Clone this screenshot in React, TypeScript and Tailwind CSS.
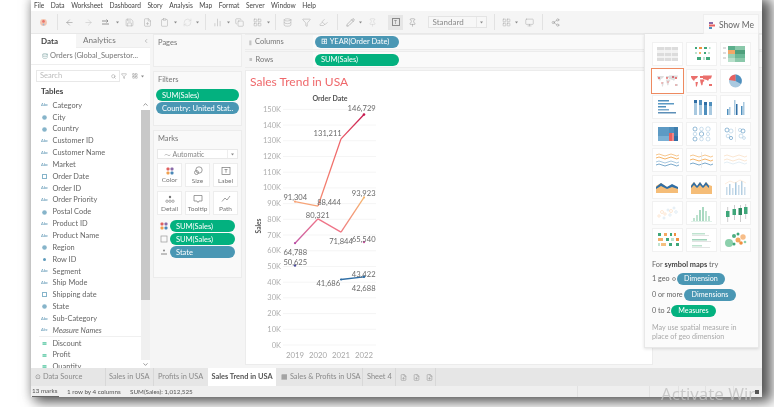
import React from "react";
import { ArrowLeft, ArrowRight, ChevronDown, ChevronUp, ChevronLeft, Save, FilePlus, RefreshCw, Copy, Pin, Share2, Monitor, Filter, Search, Highlighter, Pencil, Database, LayoutGrid, BarChart2, Clipboard } from "lucide-react";

const G = "#a6a6a6";
const ic = { size: 9, strokeWidth: 1.3, color: G };

const Caret = () => <svg width="9" height="9" viewBox="0 0 9 9"><path d="M3 3.5h3L4.5 5.5z" fill="#8a8a8a" /></svg>;
const Sep = () => <div className="mx-auto h-[16px] w-px bg-[#e2e2e2]" />;

const tools: { c: string; n: React.ReactNode }[] = [
  { c: "", n: <svg width="9" height="9" viewBox="0 0 9 9"><circle cx="4.5" cy="4.5" r="3.4" fill="#f4c5b0" /><circle cx="4.5" cy="3.4" r="1.3" fill="#e8736a" /><circle cx="4.5" cy="6.4" r="1" fill="#9fb7d2" /></svg> },
  { c: "ml-[5px]", n: <Sep /> },
  { c: "ml-[3px]", n: <ArrowLeft {...ic} color="#808080" /> },
  { c: "ml-[10px]", n: <ArrowRight {...ic} color="#bdbdbd" /> },
  { c: "ml-[8px]", n: <svg width="9" height="9" viewBox="0 0 9 9" fill="none" stroke="#8a8a8a" strokeWidth="0.9"><path d="M1 3h6M5.5 1.5 7 3 5.500 4.500M1 6h7" /></svg> },
  { c: "ml-[3px]", n: <Caret /> },
  { c: "ml-[3px]", n: <Save {...ic} /> },
  { c: "ml-[9px]", n: <FilePlus {...ic} /> },
  { c: "ml-[8px]", n: <Clipboard {...ic} /> },
  { c: "ml-[2px]", n: <Caret /> },
  { c: "ml-[3px]", n: <RefreshCw {...ic} color="#d0d0d0" /> },
  { c: "ml-[1px]", n: <Caret /> },
  { c: "-ml-[1px]", n: <Sep /> },
  { c: "ml-[3px]", n: <BarChart2 {...ic} /> },
  { c: "ml-[2px]", n: <Caret /> },
  { c: "ml-[2px]", n: <Copy {...ic} /> },
  { c: "ml-[9px]", n: <LayoutGrid {...ic} /> },
  { c: "ml-[2px]", n: <Caret /> },
  { c: "-ml-[2px]", n: <Sep /> },
  { c: "ml-[3px]", n: <Database {...ic} /> },
  { c: "ml-[10px]", n: <Filter {...ic} /> },
  { c: "ml-[8px]", n: <Highlighter {...ic} /> },
  { c: "ml-[5px]", n: <Sep /> },
  { c: "ml-[4px]", n: <Pencil {...ic} color="#808080" /> },
  { c: "ml-[1px]", n: <Caret /> },
  { c: "ml-[3px]", n: <Pin {...ic} color="#d0d0d0" /> },
];

function Toolbar() {
  return (
    <div className="flex h-[23px] shrink-0 items-center border-b border-[#e8e8e8] bg-[#f5f5f5] pl-[8px]">
      {tools.map((t, i) => (
        <div key={i} className={`flex w-[9px] shrink-0 items-center justify-center ${t.c}`}>{t.n}</div>
      ))}
      <div className="ml-[11px] flex h-[15px] w-[15px] shrink-0 items-center justify-center bg-[#e6e6e6]">
        <div className="flex h-[8px] w-[8px] items-center justify-center border border-[#8a8a8a] text-[5px] leading-none text-[#777]">T</div>
      </div>
      <div className="ml-[5px] flex w-[9px] shrink-0 justify-center"><Pin {...ic} color="#909090" /></div>
      <div className="ml-[10.500px] flex h-[12px] w-[59px] shrink-0 items-center justify-between border border-[#e4e4e4] bg-[#f7f7f7] pl-[4px] text-[8px] text-[#8a8a8a]">
        <span>Standard</span>
        <span className="flex h-full w-[10px] items-center justify-center border-l border-[#e8e8e8]"><Caret /></span>
      </div>
      <div className="ml-[3.500px] w-[9px]"><Sep /></div>
      <div className="ml-[3px] w-[9px]"><LayoutGrid {...ic} /></div>
      <div className="ml-[1px] w-[9px]"><Caret /></div>
      <div className="ml-[4px] w-[9px]"><Monitor {...ic} /></div>
      <div className="ml-[4px] w-[9px]"><Sep /></div>
      <div className="ml-[4px] w-[9px]"><Share2 {...ic} color="#909090" /></div>
    </div>
  );
}

type K = "a" | "g" | "c" | "n" | "m";
const dims: [K, string][] = [
  ["a", "Category"], ["g", "City"], ["g", "Country"], ["a", "Customer ID"], ["a", "Customer Name"], ["a", "Market"],
  ["c", "Order Date"], ["a", "Order ID"], ["a", "Order Priority"], ["g", "Postal Code"], ["a", "Product ID"], ["a", "Product Name"],
  ["g", "Region"], ["n", "Row ID"], ["a", "Segment"], ["a", "Ship Mode"], ["c", "Shipping date"], ["g", "State"], ["a", "Sub-Category"], ["m", "Measure Names"],
];

function FIcon({ k }: { k: K | "h" }) {
  if (k === "a" || k === "m") return <span className="w-[7px] text-[4px] leading-none font-bold text-[#7aa9c2]">Abc</span>;
  if (k === "g") return <svg width="7" height="7" viewBox="0 0 7 7"><circle cx="3.500" cy="3.500" r="2.300" fill="#86b4ca" /></svg>;
  if (k === "c") return <svg width="7" height="7" viewBox="0 0 7 7"><rect x="1.500" y="1.500" width="4" height="4" fill="none" stroke="#86b4ca" /></svg>;
  if (k === "n") return <svg width="7" height="7" viewBox="0 0 7 7"><circle cx="3.500" cy="3.500" r="1.500" fill="#5f9cbc" /></svg>;
  return <svg width="7" height="7" viewBox="0 0 7 7"><path d="M1.500 2.800h4M1.500 4.200h4" stroke="#3fbf95" /></svg>;
}

function Field({ k, t }: { k: K | "h"; t: string }) {
  return (
    <div className={`flex h-[11.85px] shrink-0 items-center gap-[4.500px] pl-[10px] text-[7.400px] leading-none text-[#666] ${k === "m" ? "italic" : ""}`}>
      <FIcon k={k} />
      <span>{t}</span>
    </div>
  );
}

function Sidebar() {
  return (
    <div className="flex w-[119px] shrink-0 flex-col bg-white">
      <div className="flex h-[14px] shrink-0">
        <div className="flex w-[45px] items-center pl-[10px] text-[8px] font-bold text-[#444]">Data</div>
        <div className="flex flex-1 items-center justify-between border-b border-[#eee] bg-[#f5f5f5] pr-[1px] pl-[7px] text-[8.200px] text-[#777]">
          <span>Analytics</span>
          <ChevronLeft size={6} color="#888" />
        </div>
      </div>
      <div className="flex h-[17px] shrink-0 items-center gap-[2px] border-b border-[#eee] pl-[11px] text-[7.500px] text-[#777]">
        <Database size={6} color="#8aa" />
        <span>Orders (Global_Superstor...</span>
      </div>
      <div className="mt-[5px] flex h-[12px] shrink-0 items-center pl-[5px]">
        <div className="flex h-[12px] w-[84px] items-center justify-between border border-[#e8e8e8] px-[3px] text-[7.500px] text-[#bbb]">
          <span>Search</span>
          <Search size={5} color="#888" />
        </div>
        <Filter size={6} color="#999" className="ml-[1px]" />
        <LayoutGrid size={6} color="#999" className="ml-[5px]" />
        <Caret />
      </div>
      <div className="flex h-[17.500px] shrink-0 items-center pt-px pl-[10px] text-[8px] font-bold text-[#444]">Tables</div>
      <div className="flex min-h-0 flex-1">
        <div className="flex min-w-0 flex-1 flex-col overflow-hidden">
          {dims.map(([k, t]) => <Field key={t} k={k} t={t} />)}
          <div className="ml-[8px] h-px shrink-0 bg-[#f0f0f0]" />
          <Field k="h" t="Discount" />
          <Field k="h" t="Profit" />
          <Field k="h" t="Quantity" />
        </div>
        <div className="flex w-[9px] shrink-0 flex-col bg-[#f0f0f0]">
          <div className="flex h-[10px] items-center justify-center bg-white"><ChevronUp size={7} color="#555" strokeWidth={2} /></div>
          <div className="h-[190px] bg-[#c8c8c8]" />
          <div className="flex-1" />
          <div className="flex h-[8px] items-center justify-center bg-white"><ChevronDown size={7} color="#555" strokeWidth={2} /></div>
        </div>
      </div>
    </div>
  );
}

const Pill = ({ c, t, w }: { c: string; t: string; w: string }) => (
  <div className={`flex h-[12px] items-center rounded-full pl-[6px] text-[7.500px] leading-none whitespace-nowrap text-white ${c} ${w}`}>{t}</div>
);
const GREEN = "bg-[#03b17f]";
const BLUE = "bg-[#4a97b4]";

const Four = () => (
  <svg width="8" height="8" viewBox="0 0 8 8"><rect x="0.500" y="0.500" width="3" height="3" rx="1" fill="#e0605f" /><rect x="4.500" y="0.500" width="3" height="3" rx="1" fill="#8a6aa8" /><rect x="0.500" y="4.500" width="3" height="3" rx="1" fill="#f0a050" /><rect x="4.500" y="4.500" width="3" height="3" rx="1" fill="#4a88b8" /></svg>
);
const marks: [React.ReactNode, string][] = [
  [<Four />, "Color"],
  [<svg width="10" height="10" viewBox="0 0 10 10" fill="none" stroke="#777" strokeWidth="0.7"><circle cx="6" cy="4" r="3.200" /><circle cx="3.500" cy="6.500" r="2" /></svg>, "Size"],
  [<svg width="10" height="10" viewBox="0 0 10 10"><rect x="1" y="1.500" width="8" height="7" fill="none" stroke="#777" strokeWidth="0.7" /><path d="M3.500 3.500h3M5 3.500v3.200" stroke="#777" strokeWidth="0.7" /></svg>, "Label"],
  [<svg width="10" height="10" viewBox="0 0 10 10" fill="#777"><circle cx="5" cy="3" r="1.200" /><g fill="none" stroke="#777" strokeWidth="0.6"><circle cx="2" cy="7.200" r="1.200" /><circle cx="5" cy="7.200" r="1.200" /><circle cx="8" cy="7.200" r="1.200" /></g></svg>, "Detail"],
  [<svg width="10" height="10" viewBox="0 0 10 10" fill="none" stroke="#777" strokeWidth="0.7"><path d="M1 1.500h8v5.500H6L5 8.500 4 7H1z" /></svg>, "Tooltip"],
  [<svg width="10" height="10" viewBox="0 0 10 10" fill="none" stroke="#777" strokeWidth="0.7"><path d="M1 7.500 4 4l2 2 3-4" /></svg>, "Path"],
];

function Cards() {
  return (
    <div className="flex w-[89px] shrink-0 flex-col">
      <div className="flex h-[33px] shrink-0 flex-col border border-[#ececec] bg-[#f9f9f9] pt-[2px] pl-[4px] text-[7.500px] text-[#777]">Pages</div>
      <div className="mt-[4px] flex h-[55px] shrink-0 flex-col border border-[#ececec] bg-[#f9f9f9] px-[2px] pt-[2px]">
        <div className="pl-[2px] text-[7.500px] text-[#777]">Filters</div>
        <div className="mt-[4px] flex flex-col gap-px">
          <Pill c={GREEN} t="SUM(Sales)" w="w-[83px]" />
          <Pill c={BLUE} t="Country: United Stat.." w="w-[83px]" />
        </div>
      </div>
      <div className="mt-[4px] flex h-[148px] shrink-0 flex-col border border-[#ececec] bg-[#f9f9f9] px-[3px] pt-[2px]">
        <div className="pl-[1px] text-[7.500px] text-[#777]">Marks</div>
        <div className="mt-[5px] flex h-[10px] items-center justify-between border border-[#e8e8e8] bg-white pl-[6px] text-[7px] text-[#888]">
          <span>⁓ Automatic</span>
          <span className="flex h-full w-[10px] items-center justify-center border-l border-[#eee]"><Caret /></span>
        </div>
        <div className="mt-[4px] grid grid-cols-3 gap-x-[3px] gap-y-[4px]">
          {marks.map(([i, t]) => (
            <div key={t} className="flex h-[24px] flex-col items-center justify-center gap-px border border-[#ededed] bg-white text-[6.500px] leading-none text-[#777]">
              {i}
              <span className="mt-[1px]">{t}</span>
            </div>
          ))}
        </div>
        <div className="mt-[5px] flex flex-col gap-px">
          {[
            [<Four />, "SUM(Sales)", GREEN],
            [<svg width="8" height="8" viewBox="0 0 8 8"><rect x="1" y="1" width="6" height="6" fill="none" stroke="#999" strokeWidth="0.7" /></svg>, "SUM(Sales)", GREEN],
            [<svg width="8" height="8" viewBox="0 0 8 8" fill="#888"><circle cx="4" cy="2.500" r="1" /><rect x="1" y="5.500" width="6" height="1" /></svg>, "State", BLUE],
          ].map(([i, t, c], n) => (
            <div key={n} className="flex items-center">
              <span className="ml-[3px] flex w-[8px] shrink-0 justify-center">{i as React.ReactNode}</span>
              <Pill c={`ml-[2px] ${c as string}`} t={t as string} w="w-[65px]" />
            </div>
          ))}
        </div>
      </div>
    </div>
  );
}

const Shelf = ({ icon, label, pill, c, h }: { icon: string; label: string; pill: string; c: string; h: string }) => (
  <div className={`flex shrink-0 items-center border-y border-[#ececec] bg-[#fafafa] ${h}`}>
    <div className="flex h-full w-[68px] shrink-0 items-center gap-[3px] bg-[#f5f5f5] pl-[4px] text-[7.500px] text-[#777]">
      <span className="text-[6px] text-[#999]">{icon}</span>{label}
    </div>
    <Pill c={`ml-[2px] ${c}`} t={pill} w="w-[84px]" />
  </div>
);

const W = 1.571;
const Y = (v: number) => 345 - v * W / 1000;
const X = [295, 318, 341, 364];
const ticks = Array.from({ length: 16 }, (_, i) => i * 10);

function Chart() {
  const seg = (a: number, b: number, va: number, vb: number, c: string) => (
    <line x1={X[a]} y1={Y(va)} x2={X[b]} y2={Y(vb)} stroke={c} strokeWidth="1.300" />
  );
  const lab = (x: number, y: number, t: string) => (
    <text x={x} y={y} textAnchor="middle" dominantBaseline="central" fontSize="7.600" fill="#6a6a6a">{t}</text>
  );
  return (
    <svg width="406" height="274" viewBox="246 90 406 274" fontFamily="Lato" className="shrink-0">
      <text x="330" y="98" textAnchor="middle" dominantBaseline="central" fontSize="7" fontWeight="700" fill="#555">Order Date</text>
      <text x="0" y="0" transform="translate(258 226) rotate(-90)" textAnchor="middle" dominantBaseline="central" fontSize="6.500" fontWeight="700" fill="#555">Sales</text>
      {ticks.map((t) => (
        <g key={t}>
          <line x1="283" x2="376" y1={Y(t * 1000)} y2={Y(t * 1000)} stroke="#f3f3f3" strokeWidth="0.800" />
          <text x="281" y={Y(t * 1000)} textAnchor="end" dominantBaseline="central" fontSize="7.500" fill="#adadad">{t}K</text>
        </g>
      ))}
      {[2019, 2020, 2021, 2022].map((y, i) => (
        <text key={y} x={X[i]} y="355" textAnchor="middle" dominantBaseline="central" fontSize="7.800" fill="#a8a8a8">{y}</text>
      ))}
      <defs>
        <linearGradient id="ga" gradientUnits="userSpaceOnUse" x1="318" y1="206" x2="341" y2="139"><stop offset="0" stopColor="#f58a70" /><stop offset="1" stopColor="#ee6168" /></linearGradient>
        <linearGradient id="gb" gradientUnits="userSpaceOnUse" x1="341" y1="139" x2="364" y2="114"><stop offset="0" stopColor="#ea5a66" /><stop offset="1" stopColor="#c6194f" /></linearGradient>
        <linearGradient id="gc" gradientUnits="userSpaceOnUse" x1="295" y1="243" x2="318" y2="219"><stop offset="0" stopColor="#c55aa6" /><stop offset="1" stopColor="#ef7488" /></linearGradient>
        <linearGradient id="gd" gradientUnits="userSpaceOnUse" x1="341" y1="232" x2="364" y2="197"><stop offset="0" stopColor="#ef7a80" /><stop offset="1" stopColor="#f6b870" /></linearGradient>
      </defs>
      {seg(0, 1, 91304, 88444, "#f7a478")}
      {seg(1, 2, 88444, 131211, "url(#ga)")}
      {seg(2, 3, 131211, 146729, "url(#gb)")}
      {seg(0, 1, 64788, 80321, "url(#gc)")}
      {seg(1, 2, 80321, 71844, "#ef7488")}
      {seg(2, 3, 71844, 93923, "url(#gd)")}
      {seg(2, 3, 41686, 43422, "#2f6ea5")}
      <circle cx={X[0]} cy={Y(91304)} r="1.100" fill="#f7a478" />
      <circle cx={X[3]} cy={Y(146729)} r="1.300" fill="#c6194f" />
      <circle cx={X[3]} cy={Y(93923)} r="1.100" fill="#f6b870" />
      <circle cx={X[0]} cy={Y(64788)} r="1.100" fill="#b84fa6" />
      <circle cx={X[3]} cy={Y(65540)} r="1.200" fill="#c8509f" />
      <circle cx={X[0]} cy={Y(50625)} r="1.200" fill="#4a4a9e" />
      <circle cx={X[2]} cy={Y(41686)} r="1.100" fill="#2f6ea5" />
      <circle cx={X[3]} cy={Y(43422)} r="1.300" fill="#2f6ea5" />
      {lab(361.700, 108, "146,729")}
      {lab(327.700, 133.300, "131,211")}
      {lab(295.300, 197, "91,304")}
      {lab(329, 201.700, "88,444")}
      {lab(317.700, 215, "80,321")}
      {lab(363.700, 192.700, "93,923")}
      {lab(341, 241, "71,844")}
      {lab(363.700, 238.700, "65,540")}
      {lab(295.300, 252.300, "64,788")}
      {lab(295.300, 262.300, "50,625")}
      {lab(363.700, 274, "43,422")}
      {lab(328.300, 283, "41,686")}
      {lab(363.700, 288, "42,688")}
    </svg>
  );
}

const B = "#4f8fbd", L = "#a9c9e0", O = "#f5b56a", R = "#e8605f", GR = "#3fa77a", LG = "#bfe3d0";
const rects = (items: [number, number, number, number, string][]) => items.map(([x, y, w, h, f], i) => <rect key={i} x={x} y={y} width={w} height={h} fill={f} />);
const wave = (y: number, c: string, s = 1) => <path d={`M4 ${y}q3 -2 6 0t6 0t6 0t5 0`} fill="none" stroke={c} strokeWidth={s} />;
const circles = (items: [number, number, number, string][], fill = false) => items.map(([x, y, r, c], i) => <circle key={i} cx={x} cy={y} r={r} fill={fill ? c : "none"} stroke={fill ? "none" : c} strokeWidth="0.600" />);
const world = "M5 7h7l-1 2-2 1-1 2-2-2-1-2zM9.500 13h2.500l-1 4-1 1zM14 7h3v2h-3zM17 6.500h9l-1 3-2 .5-1 2-1-1-4-1zM14 10.500h3.500l1 1.500-1.500 1-.5 3-1 .5-1-3zM23 15h3v2h-3z";

const thumbs: React.ReactNode[] = [
  <>{rects([[5, 5, 21, 14, "#dcdcdc"], [5, 8, 21, 3, "#f2f2f2"], [5, 14, 21, 2, "#f2f2f2"], [12, 5, 0.8, 14, "#f5f5f5"], [19, 5, 0.8, 14, "#f5f5f5"]])}</>,
  <>{rects([[9, 5, 2, 2, GR], [13, 5, 3, 2, "#f09040"], [18, 5, 3, 2, GR], [23, 5, 1.500, 2, LG], [9, 10, 2, 2, LG], [13, 10, 2, 2, "#f5b06a"], [18, 10, 2, 2, GR], [22, 10, 2, 2, LG], [11, 15, 4, 3, GR], [17, 15, 2, 3, LG], [20, 15, 4, 3, GR]])}</>,
  <>{rects([[8, 4, 7, 4, "#5caf8c"], [15, 4, 10, 4, "#8ac8aa"], [8, 8, 7, 4, "#f2a868"], [15, 8, 10, 4, "#4f9f7c"], [8, 12, 7, 4, "#9bd0b5"], [15, 12, 10, 4, "#6ab896"], [8, 16, 7, 4, "#b8dfca"], [15, 16, 10, 4, "#8ac8aa"], [3, 5, 3, 2, "#ddd"], [3, 10, 3, 2, "#ddd"], [3, 15, 3, 2, "#ddd"]])}</>,
  <><path d={world} fill="#dedede" />{circles([[7, 9, 1, R], [10, 14, 0.800, "#e88"], [15, 9, 0.900, R], [16, 13, 0.800, "#e88"], [21, 8, 1, "#c85060"], [24, 9, 1.100, R], [24, 16, 0.800, "#e88"]], true)}</>,
  <><path d={world} fill="#ea6f6c" /></>,
  <><circle cx="15.500" cy="12" r="6.500" fill={L} /><path d="M15.500 12V5.500a6.500 6.500 0 0 1 5.500 9.500z" fill={B} /><path d="M15.500 12 9 11a6.500 6.500 0 0 1 6.500-5.500z" fill={R} /></>,
  <>{rects([[6, 5, 11, 1.500, B], [6, 8, 16, 1.500, "#5d9ac4"], [6, 11, 8, 1.500, B], [6, 14, 11, 1.500, "#7aa9cc"], [6, 17, 18, 1.500, "#5d8fb8"]])}</>,
  <>{rects([[8, 5, 3, 3, "#2f6ea5"], [8, 8, 3, 12, L], [13, 5, 3, 5, B], [13, 10, 3, 10, L], [18, 7, 3, 3, "#2f6ea5"], [18, 10, 3, 10, B], [23, 7, 3, 4, B], [23, 11, 3, 9, L]])}</>,
  <>{rects([[7, 14, 1.500, 6, B], [9, 12, 1.500, 8, L], [14, 5, 1.500, 15, L], [16, 9, 1.500, 11, "#2f6ea5"], [21, 11, 1.500, 9, B], [23, 7, 1.500, 13, L]])}</>,
  <>{rects([[6, 5, 11, 9, "#5d9ac4"], [6, 14, 11, 5, "#7ab0d4"], [17, 5, 5, 6, B], [17, 11, 3, 8, R], [20, 11, 2, 8, "#f08888"], [22, 5, 4, 9, "#3f7fae"], [22, 14, 4, 5, "#2f6ea5"]])}</>,
  <>{circles([[9, 7, 2, B], [9, 12, 1.800, L], [9, 17, 2, B], [15.500, 7, 1.800, L], [15.500, 12, 2.200, B], [15.500, 17, 1.800, L], [22, 7, 2.200, L], [22, 12, 1.600, L], [22, 17, 2, L]])}</>,
  <>{circles([[7, 8, 2, B], [11, 9, 2, L], [8, 14, 1.800, L], [11, 16, 1.600, B], [20, 8, 1.600, L], [23, 9, 2, B], [21, 14, 2, L], [24, 16, 1.400, L]])}<line x1="15.500" y1="5" x2="15.500" y2="20" stroke="#e8e8e8" strokeWidth="0.700" /></>,
  <>{wave(7, "#f7c890")}{wave(10, O)}{wave(14, L)}{wave(17, "#7aa9cc")}</>,
  <>{wave(8, "#f7c890")}{wave(12, O)}{wave(16, "#7aa9cc")}<line x1="15.500" y1="4" x2="15.500" y2="20" stroke="#e4e4e4" strokeWidth="0.700" /></>,
  <>{wave(8, "#f9dcc0", 0.700)}{wave(12, "#f9dcc0", 0.700)}{wave(15, "#d8e6f0", 0.700)}</>,
  <><path d="M4 18V11l5-3 6 4 5-2 6 3v5z" fill="#f5bd78" /><path d="M4 12l5-4 6 4 5-3 6 3v2l-6-2-5 2-6-3-5 3z" fill="#2f6ea5" /></>,
  <><path d="M5 19v-9l3-3 3 4 3-4 3 4 3-4 3 3 3 1v8z" fill="#f5bd78" /><path d="M5 11l3-4 3 4 3-4 3 4 3-4 3 4v2l-3-3-3 3-3-3-3 3-3-3-3 3z" fill="#2f6ea5" /></>,
  <>{rects([[6, 12, 1.500, 8, "#c9dcea"], [9, 9, 1.500, 11, "#b5cfe2"], [12, 13, 1.500, 7, "#c9dcea"], [15, 7, 1.500, 13, "#a9c9e0"], [18, 10, 1.500, 10, "#c9dcea"], [21, 6, 1.500, 14, "#b5cfe2"], [24, 12, 1.500, 8, "#c9dcea"]])}<path d="M5 9l5-3 5 2 5-3 6 3" fill="none" stroke="#fbe0c8" strokeWidth="0.600" /></>,
  <>{circles([[7, 15, 1.200, "#fbd9b8"], [10, 11, 1.500, "#fbd9b8"], [13, 13, 1.200, "#fbd9b8"], [16, 9, 1, "#cfe0ec"], [19, 10, 1.500, "#fbd9b8"], [22, 7, 1, "#cfe0ec"], [24, 11, 1.300, "#cfe0ec"], [12, 17, 1, "#cfe0ec"], [18, 14, 1.200, "#cfe0ec"]])}</>,
  <>{rects([[7, 17, 2, 3, LG], [10, 14, 2, 6, LG], [13, 9, 2, 11, "#a8d8c0"], [16, 6, 2, 14, "#a8d8c0"], [19, 10, 2, 10, LG], [22, 15, 2, 5, LG], [5, 20, 21, 0.600, "#cde8da"]])}</>,
  <>{rects([[7.500, 6, 0.600, 15, "#aaa"], [6, 10, 3.500, 6, GR], [14, 4, 0.600, 15, "#aaa"], [12.500, 8, 3.500, 6, GR], [20, 4, 0.600, 17, "#aaa"], [18.500, 7, 3.500, 7, "#2f8a62"], [25.500, 3, 0.600, 15, "#aaa"], [24, 6, 3.500, 7, GR]])}</>,
  <>{rects([[6, 5, 3, 3, GR], [12, 5, 3, 3, "#f5a860"], [18, 5, 2, 3, GR], [22, 5, 2, 3, "#f09040"], [6, 10, 5, 3, "#f5b06a"], [14, 10, 3, 3, GR], [19, 10, 3, 3, LG], [24, 10, 3, 3, "#f09040"], [6, 15, 2, 3, LG], [9, 15, 5, 3, "#f5c080"], [17, 15, 3, 3, GR], [24, 15, 3, 3, GR]])}</>,
  <>{rects([[6, 5, 13, 1.500, LG], [6, 7, 17, 0.800, "#dcdcdc"], [6, 11, 15, 1.500, "#9fd4ba"], [6, 13, 19, 0.800, "#dcdcdc"], [6, 17, 10, 1.500, LG], [6, 19, 18, 0.800, "#dcdcdc"]])}</>,
  <>{circles([[9, 15, 4, "#8cd0ac"], [14, 8, 2, "#4fae82"], [18, 6, 1.500, GR], [18, 12, 2.500, "#f5a860"], [23, 9, 2.700, "#f7bd88"], [21, 15, 1.800, "#f09040"], [14, 16, 1.500, GR], [25, 14, 1.300, "#8cd0ac"]], true)}</>,
];

function ShowMe() {
  const pill = "flex h-[12px] shrink-0 items-center justify-center rounded-full text-white";
  return (
    <>
      <div className="absolute top-[14px] left-[672px] flex h-[21px] w-[56px] items-center gap-[3px] border-x border-t border-[#eee] bg-[#fbfbfb] pl-[5px] text-[8.500px] text-[#666]">
        <svg width="7" height="9" viewBox="0 0 7 9"><rect y="1" width="4" height="2" fill="#8a6aa8" /><rect y="3.500" width="6" height="2" fill="#e8605f" /><rect y="6" width="3" height="2" fill="#4f8fbd" /></svg>
        Show Me
      </div>
      <div className="absolute top-[34px] left-[613px] flex h-[314px] w-[115px] flex-col border-r border-b border-l border-[#e8e8e8] bg-[#fbfbfb] pt-[8px] pl-[7px] shadow-[0_1px_3px_rgba(0,0,0,0.12)]">
        <div className="grid grid-cols-[repeat(3,31px)] gap-x-[3px] gap-y-[2.500px]">
          {thumbs.map((t, i) => (
            <div key={i} className={`h-[24px] w-[31px] bg-white ${i === 3 ? "outline outline-1 outline-[#ee8a60]" : "border border-[#f1f1f1]"}`}>
              <svg width="31" height="24" viewBox="0 0 31 24" className={i === 3 ? "" : "-m-px"}>{t}</svg>
            </div>
          ))}
        </div>
        <div className="mt-[9px] text-[7.400px] leading-none text-[#666]">For <b className="text-[#444]">symbol maps</b> try</div>
        <div className="mt-[5px] flex h-[12px] items-center text-[7.200px] text-[#666]">
          <span className="w-[20px] shrink-0">1 geo</span>
          <span className="h-[4px] w-[4px] shrink-0 rounded-full border border-[#999]" />
          <span className={`ml-px w-[48px] bg-[#4a97b4] ${pill}`}>Dimension</span>
        </div>
        <div className="mt-[4px] flex h-[12px] items-center text-[7.200px] text-[#666]">
          <span className="w-[32px] shrink-0">0 or more</span>
          <span className={`w-[52px] bg-[#4a97b4] ${pill}`}>Dimensions</span>
        </div>
        <div className="mt-[4px] flex h-[12px] items-center text-[7.200px] text-[#666]">
          <span className="w-[19px] shrink-0">0 to 2</span>
          <span className={`w-[45px] bg-[#03b17f] ${pill}`}>Measures</span>
        </div>
        <div className="mt-[6px] text-[7.200px] leading-[9px] text-[#aaa]">May use spatial measure in<br />place of geo dimension</div>
      </div>
    </>
  );
}

function Tabs() {
  const cell = "flex shrink-0 items-center border-r border-[#d8d8d8]";
  return (
    <div className="flex h-[18px] shrink-0 items-stretch bg-[#e6e6e6] text-[7.400px] text-[#8a8a8a]">
      <div className={`${cell} w-[75px] pl-[4px]`}>⊙ Data Source</div>
      <div className={`${cell} w-[48px] pl-[3px]`}>Sales in USA</div>
      <div className={`w-[54px] shrink-0 pl-[4px] leading-[18px]`}>Profits in USA</div>
      <div className="flex w-[68px] shrink-0 items-center justify-center bg-white font-bold text-[#555]">Sales Trend in USA</div>
      <div className={`${cell} w-[87px] pl-[5px]`}>▦ Sales &amp; Profits in USA</div>
      <div className={`${cell} w-[33px] pl-[4px]`}>Sheet 4</div>
      {[0, 1, 2].map((i) => (
        <div key={i} className="ml-px flex w-[12px] shrink-0 items-center justify-center">
          <FilePlus size={7} color="#999" />
        </div>
      ))}
      <div className="w-px bg-[#d8d8d8]" />
    </div>
  );
}

function Status() {
  const cell = "h-full shrink-0 border-l border-[#e2e2e2]";
  return (
    <div className="flex h-[11px] shrink-0 items-center bg-[#efefef] pl-[1px] text-[6.300px] text-[#555]">
      <span className="flex h-full w-[27px] shrink-0 items-center border-b border-[#666]">13 marks</span>
      <span className="ml-[8px] w-[63px] shrink-0">1 row by 4 columns</span>
      <span className="w-[100px] shrink-0 whitespace-nowrap">SUM(Sales): 1,012,525</span>
      <span className="flex-1" />
      <div className={`${cell} w-[72px]`} />
      <div className={`${cell} w-[29px]`} />
      <div className={`${cell} w-[27px]`} />
      <div className={`${cell} w-[28px]`} />
      <div className={`${cell} flex w-[29px] items-center justify-end pr-[3px]`}>
        <div className="h-[4px] w-[4px] bg-[#555]" />
      </div>
    </div>
  );
}

function App() {
  return (
    <div className="relative h-[407px] w-[774px] overflow-hidden bg-white blur-[0.4px]" style={{ fontFamily: "Lato, sans-serif" }}>
      <div className="relative ml-[31px] flex h-[397px] w-[731px] flex-col bg-white shadow-[7px_2px_12px_3px_rgba(0,0,0,0.62),0_0_10px_rgba(0,0,0,0.2)]">
        <div className="flex h-[11px] shrink-0 items-center gap-[6.500px] pl-[3px] text-[6.600px] leading-none text-[#444]">
          {["File", "Data", "Worksheet", "Dashboard", "Story", "Analysis", "Map", "Format", "Server", "Window", "Help"].map((m) => <span key={m}>{m}</span>)}
        </div>
        <Toolbar />
        <div className="flex min-h-0 flex-1 bg-[#f5f5f5]">
          <Sidebar />
          <div className="ml-[3px] flex"><Cards /></div>
          <div className="ml-[3px] flex min-w-0 flex-1 flex-col">
            <Shelf h="h-[16px]" icon="⦀" label="Columns" pill="⊞ YEAR(Order Date)" c={BLUE} />
            <div className="mt-px"><Shelf h="h-[17px]" icon="≡" label="Rows" pill="SUM(Sales)" c={GREEN} /></div>
            <div className="mt-[2px] flex h-[295px] w-[408px] shrink-0 flex-col border border-[#ececec] bg-white">
              <div className="flex h-[19px] shrink-0 items-center pt-[3px] pl-[4px] text-[12px] text-[#ef686b]">Sales Trend in USA</div>
              <Chart />
            </div>
          </div>
        </div>
        <Tabs />
        <Status />
        <ShowMe />
      </div>
      <div className="pointer-events-none absolute top-[385px] left-[661px] text-[17px] leading-none whitespace-nowrap text-[#c0c0c0] opacity-80" style={{ fontFamily: "'Open Sans', sans-serif" }}>Activate Wir</div>
    </div>
  );
}

export default App;
